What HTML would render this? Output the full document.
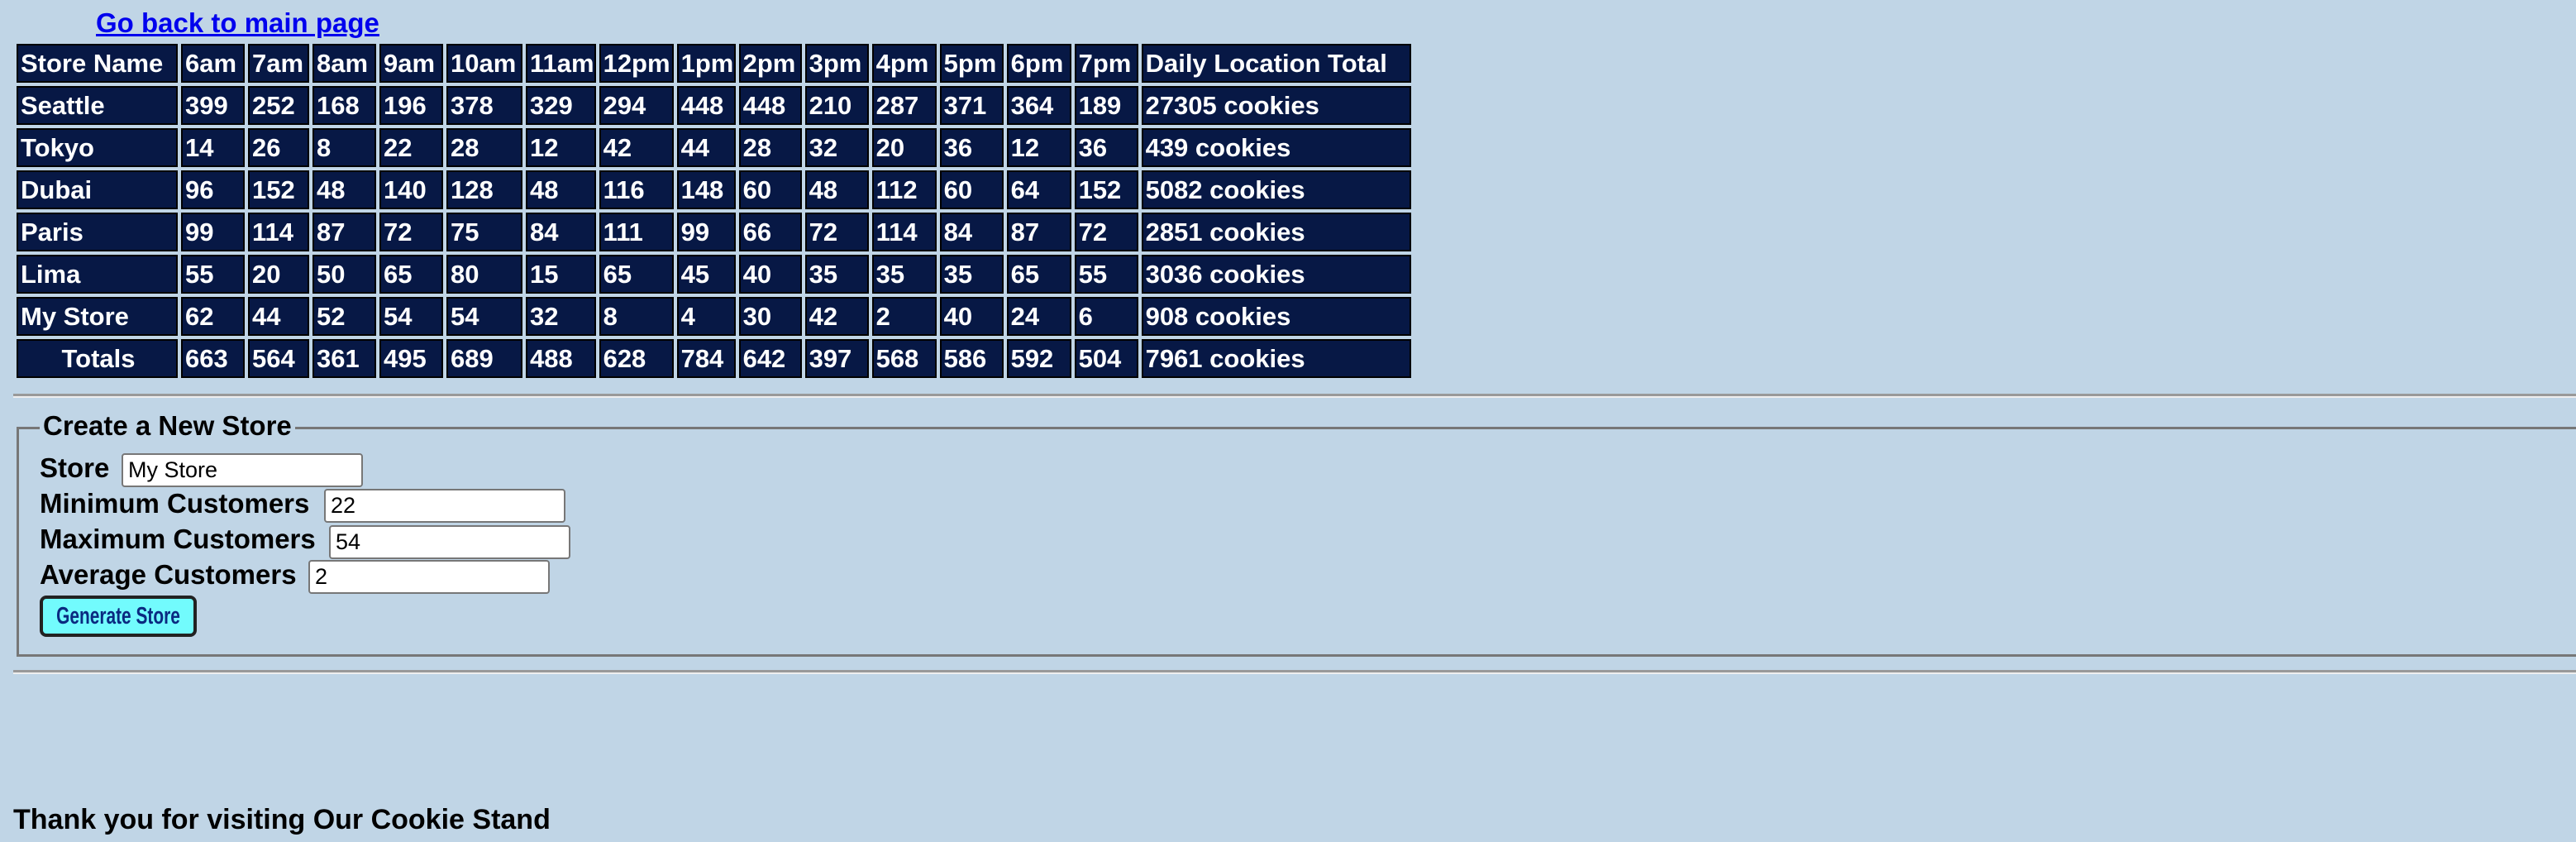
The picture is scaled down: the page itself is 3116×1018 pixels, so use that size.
<!DOCTYPE html>
<html><head><meta charset="utf-8"><style>
body{margin:0;width:3116px;height:1018px;background:#c0d5e6;font-family:"Liberation Sans",sans-serif;font-weight:bold;position:relative;overflow:hidden}
a{position:absolute;left:116px;top:9px;font-size:33px;color:#0000ee;text-decoration:underline;text-decoration-thickness:3px}
table{position:absolute;left:16px;top:49px;border-spacing:4px;table-layout:fixed;border-collapse:separate}
td{background:#071845;color:#fff;border:2px solid #000;height:47px;padding:0 0 0 3px;font-size:31px;white-space:nowrap;overflow:hidden;box-sizing:border-box}
td.c{text-align:center}
hr{position:absolute;left:16px;width:3100px;margin:0;border:0;border-top:3px solid #999;border-bottom:2px solid #eee}
.fs{position:absolute;left:20px;top:516px;width:3110px;height:278px;border:3px solid #777;box-sizing:border-box;border-right:none}
.lg{position:absolute;left:48px;top:496px;background:#c0d5e6;padding:0 4px;font-size:33px;color:#000}
.lb{position:absolute;left:48px;font-size:33px;color:#000}
.in{position:absolute;height:41px;width:292px;background:#fff;border:2px solid #777;border-radius:4px;box-sizing:border-box;font-weight:normal;font-size:27px;padding-left:6px;line-height:37px}
.btn{position:absolute;left:48px;top:720px;width:190px;height:50px;background:#72fbfd;border:4px solid #222;border-radius:8px;box-sizing:border-box;color:#0a2a80;font-size:29px;line-height:42px;white-space:nowrap;overflow:hidden}
.btn span{position:absolute;left:50%;top:0;transform:translateX(-50%) scaleX(0.72)}
.ty{position:absolute;left:16px;top:972px;font-size:34px;color:#000}
</style></head><body>
<a>Go back to main page</a>
<table>
<colgroup><col style="width:195px"><col style="width:77px"><col style="width:74px"><col style="width:77px"><col style="width:77px"><col style="width:92px"><col style="width:83px"><col style="width:90px"><col style="width:71px"><col style="width:76px"><col style="width:77px"><col style="width:78px"><col style="width:77px"><col style="width:78px"><col style="width:77px"><col style="width:326px"></colgroup>
<tr><td>Store Name</td><td>6am</td><td>7am</td><td>8am</td><td>9am</td><td>10am</td><td>11am</td><td>12pm</td><td>1pm</td><td>2pm</td><td>3pm</td><td>4pm</td><td>5pm</td><td>6pm</td><td>7pm</td><td>Daily Location Total</td></tr>
<tr><td>Seattle</td><td>399</td><td>252</td><td>168</td><td>196</td><td>378</td><td>329</td><td>294</td><td>448</td><td>448</td><td>210</td><td>287</td><td>371</td><td>364</td><td>189</td><td>27305 cookies</td></tr>
<tr><td>Tokyo</td><td>14</td><td>26</td><td>8</td><td>22</td><td>28</td><td>12</td><td>42</td><td>44</td><td>28</td><td>32</td><td>20</td><td>36</td><td>12</td><td>36</td><td>439 cookies</td></tr>
<tr><td>Dubai</td><td>96</td><td>152</td><td>48</td><td>140</td><td>128</td><td>48</td><td>116</td><td>148</td><td>60</td><td>48</td><td>112</td><td>60</td><td>64</td><td>152</td><td>5082 cookies</td></tr>
<tr><td>Paris</td><td>99</td><td>114</td><td>87</td><td>72</td><td>75</td><td>84</td><td>111</td><td>99</td><td>66</td><td>72</td><td>114</td><td>84</td><td>87</td><td>72</td><td>2851 cookies</td></tr>
<tr><td>Lima</td><td>55</td><td>20</td><td>50</td><td>65</td><td>80</td><td>15</td><td>65</td><td>45</td><td>40</td><td>35</td><td>35</td><td>35</td><td>65</td><td>55</td><td>3036 cookies</td></tr>
<tr><td>My Store</td><td>62</td><td>44</td><td>52</td><td>54</td><td>54</td><td>32</td><td>8</td><td>4</td><td>30</td><td>42</td><td>2</td><td>40</td><td>24</td><td>6</td><td>908 cookies</td></tr>
<tr><td class="c">Totals</td><td>663</td><td>564</td><td>361</td><td>495</td><td>689</td><td>488</td><td>628</td><td>784</td><td>642</td><td>397</td><td>568</td><td>586</td><td>592</td><td>504</td><td>7961 cookies</td></tr>
</table>
<hr style="top:476px">
<div class="fs"></div>
<div class="lg">Create a New Store</div>
<div class="lb" style="top:547px">Store</div><div class="in" style="left:147px;top:548px">My Store</div>
<div class="lb" style="top:590px">Minimum Customers</div><div class="in" style="left:392px;top:591px">22</div>
<div class="lb" style="top:633px">Maximum Customers</div><div class="in" style="left:398px;top:635px">54</div>
<div class="lb" style="top:676px">Average Customers</div><div class="in" style="left:373px;top:677px">2</div>
<div class="btn"><span>Generate Store</span></div>
<hr style="top:810px">
<div class="ty">Thank you for visiting Our Cookie Stand</div>
</body></html>
